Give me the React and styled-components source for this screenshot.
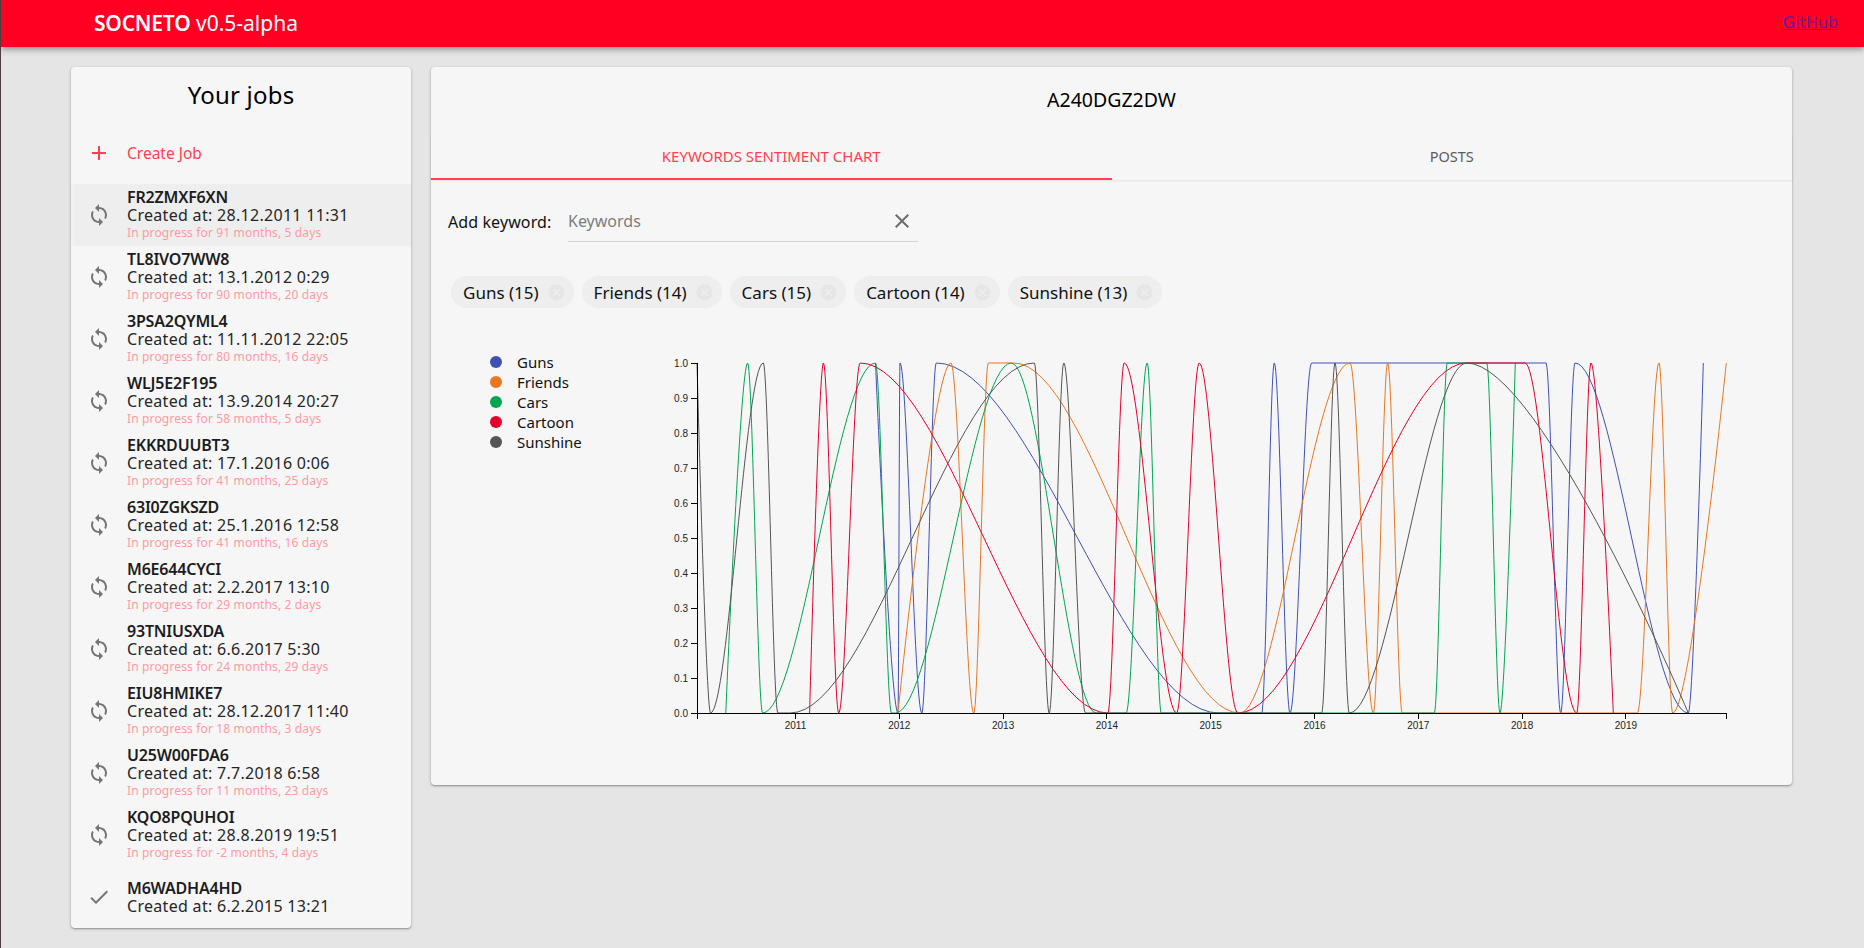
import React from 'react'
import styled, { createGlobalStyle } from 'styled-components'
import { MdAdd, MdCancel, MdCheck, MdClear, MdSync } from 'react-icons/md'

const GlobalStyle = createGlobalStyle`
    html, body {
        margin: 0;
        padding: 0;
        height: 100%;
    }

    body {
        background-color: #e5e5e5;
        border-left: 1px solid #4a3f3f;
        font-family: "Noto Sans", sans-serif;
        overflow: hidden;
    }
`

const AppBar = styled.header`
    height: 47px;
    background-color: #ff0022;
    display: flex;
    align-items: center;
    justify-content: space-between;
    padding: 0 26px 2px 93px;
    box-sizing: border-box;
    box-shadow: 0 2px 4px -1px rgba(0,0,0,.2), 0 4px 5px rgba(0,0,0,.14), 0 1px 10px rgba(0,0,0,.12);
    position: relative;
`

const Brand = styled.div`
    color: white;
    font-size: 21px;
    span {
        font-weight: 600;
        letter-spacing: -.2px;
    }
`

const GitHubLink = styled.a`
    font-family: "DejaVu Sans", sans-serif;
    font-size: 16px;
    color: #6a1aa8;
    text-decoration: underline;
`

const Content = styled.main`
    display: flex;
    align-items: flex-start;
    gap: 20px;
    padding: 20px 72px 0 70px;
`

const Card = styled.section`
    background-color: #f6f6f6;
    border-radius: 4px;
    box-shadow: 0 1px 3px rgba(0,0,0,.3), 0 1px 1px rgba(0,0,0,.14);
`

const JobsCard = styled(Card)`
    width: 340px;
    flex-shrink: 0;
`

const JobsTitle = styled.h2`
    margin: 0;
    padding-top: 11px;
    height: 44px;
    font-size: 24px;
    font-weight: 400;
    letter-spacing: .2px;
    line-height: 34px;
    text-align: center;
    color: #000;
`

const CreateRow = styled.div`
    height: 62px;
    display: flex;
    align-items: center;
    padding-left: 16px;
    color: #ff4050;
    font-size: 15.5px;
`

const IconSlot = styled.div`
    width: 40px;
    flex-shrink: 0;
    display: flex;
    font-size: 24px;
    color: ${props => props.$color || '#757575'};
`

const JobRow = styled.div`
    height: 62px;
    box-sizing: border-box;
    display: flex;
    align-items: center;
    padding-left: 13px;
    border-left: 3px solid ${props => props.$selected ? '#f2f2f2' : 'transparent'};
    background-color: ${props => props.$selected ? '#eeeeee' : 'transparent'};
`

const JobId = styled.div`
    font-size: 16px;
    font-weight: 600;
    letter-spacing: -.2px;
    line-height: 17px;
    color: #1c1c1c;
`

const JobCreated = styled.div`
    font-size: 16px;
    letter-spacing: .3px;
    line-height: 18px;
    color: #262626;
`

const JobProgress = styled.div`
    font-size: 12px;
    letter-spacing: .15px;
    line-height: 18px;
    color: #ff9aa3;
`

const MainCard = styled(Card)`
    flex: 1;
    height: 718px;
`

const JobName = styled.h3`
    margin: 0;
    height: 67px;
    line-height: 66px;
    font-size: 19.5px;
    font-weight: 400;
    text-align: center;
    color: #000;
`

const Tabs = styled.div`
    display: flex;
    height: 46px;
    box-shadow: 0 1px 2px rgba(0,0,0,.08);
`

const Tab = styled.div`
    flex: 1;
    display: flex;
    align-items: center;
    justify-content: center;
    padding-bottom: 1px;
    font-size: ${props => props.$active ? '15px' : '14.5px'};
    text-transform: uppercase;
    color: ${props => props.$active ? '#ff4050' : '#5c5c5c'};
    border-bottom: 2px solid ${props => props.$active ? '#ff4050' : 'transparent'};
`

const KeywordRow = styled.div`
    display: flex;
    align-items: center;
    padding: 20px 0 0 17px;
`

const KeywordLabel = styled.div`
    width: 120px;
    padding-top: 1px;
    font-size: 16px;
    letter-spacing: .1px;
    color: #111;
`

const KeywordInput = styled.div`
    width: 350px;
    height: 42px;
    box-sizing: border-box;
    border-bottom: 1px solid #d4d4d4;
    display: flex;
    align-items: center;
    justify-content: space-between;
    padding: 1px 4px 0 0;
    font-size: 16px;
    color: #7d7d7d;
    svg {
        font-size: 24px;
        color: #6c6c6c;
    }
`

const Chips = styled.div`
    display: flex;
    gap: 8px;
    padding: 34px 0 0 20px;
`

const Chip = styled.div`
    height: 32px;
    display: flex;
    align-items: center;
    gap: 8px;
    padding: 0 8px 0 12px;
    border-radius: 16px;
    background-color: #eeeeee;
    font-size: 17px;
    color: #111;
    svg {
        font-size: 19px;
        color: #e6e6e6;
    }
`

const ChartRow = styled.div`
    display: flex;
    padding: 42px 0 0 59px;
`

const Legend = styled.ul`
    width: 160px;
    flex-shrink: 0;
    margin: 0;
    padding: 2px 0 0;
    list-style: none;
`

const LegendItem = styled.li`
    height: 20px;
    display: flex;
    align-items: center;
    gap: 15px;
    font-size: 15px;
    color: #111;
`

const Dot = styled.i`
    width: 12px;
    height: 12px;
    border-radius: 50%;
    background-color: ${props => props.$color};
`

const ChartSvg = styled.svg`
    display: block;
    font-family: "Liberation Sans", sans-serif;
    font-size: 10px;
`

const JOBS = [
    ['FR2ZMXF6XN', '28.12.2011 11:31', '91 months, 5 days'],
    ['TL8IVO7WW8', '13.1.2012 0:29', '90 months, 20 days'],
    ['3PSA2QYML4', '11.11.2012 22:05', '80 months, 16 days'],
    ['WLJ5E2F195', '13.9.2014 20:27', '58 months, 5 days'],
    ['EKKRDUUBT3', '17.1.2016 0:06', '41 months, 25 days'],
    ['63I0ZGKSZD', '25.1.2016 12:58', '41 months, 16 days'],
    ['M6E644CYCI', '2.2.2017 13:10', '29 months, 2 days'],
    ['93TNIUSXDA', '6.6.2017 5:30', '24 months, 29 days'],
    ['EIU8HMIKE7', '28.12.2017 11:40', '18 months, 3 days'],
    ['U25W00FDA6', '7.7.2018 6:58', '11 months, 23 days'],
    ['KQO8PQUHOI', '28.8.2019 19:51', '-2 months, 4 days'],
    ['M6WADHA4HD', '6.2.2015 13:21', null],
]

const KEYWORDS = ['Guns (15)', 'Friends (14)', 'Cars (15)', 'Cartoon (14)', 'Sunshine (13)']

// chart geometry, svg origin sits at the left of the y labels
const X0 = 47
const X1 = 1076
const Y_TOP = 13
const Y_BOTTOM = 363
const SVG_LEFT = 650

// traced turning points, page x of each extreme, 0 = bottom and 1 = top
const a = zx => 660 + zx / 2.613 - SVG_LEFT
const b = zx => 1240 + zx / 3 - SVG_LEFT

// the series start and stop mid slope, so their first and last points have no flat tangent
const SERIES = [
    { name: 'Guns', color: '#3f51b5', points: [
        [a(563), 1], [a(622), 0], [a(627), 1], [a(684), 0], [a(722), 1], [a(1460), 0],
        [b(65), 0], [b(103), 1], [b(150), 0], [b(215), 1], [b(918), 1], [b(962), 0],
        [b(1005), 1], [b(1345), 0], [b(1390), 1],
    ] },
    { name: 'Friends', color: '#e87722', points: [
        [a(622), 0], [a(760), 1], [a(820), 0], [a(858), 1], [a(925), 1], [a(1515), 0],
        [b(330), 1], [b(400), 0], [b(443), 1], [b(487), 0], [b(1192), 0], [b(1257), 1],
        [b(1298), 0], [b(1459), 1],
    ] },
    { name: 'Cars', color: '#00a651', points: [
        [a(172), 0], [a(229), 1], [a(268), 0], [a(563), 1], [a(605), 0], [a(615), 0],
        [a(918), 1], [a(1140), 0], [a(1218), 0], [a(1273), 1], [a(1310), 0], [b(583), 0],
        [b(622), 1], [b(740), 1], [b(780), 0], [b(826), 1],
    ] },
    { name: 'Cartoon', color: '#e4002b', points: [
        [a(391), 0], [a(427), 1], [a(467), 0], [a(523), 1], [a(1170), 0], [a(1213), 1],
        [a(1350), 0], [a(1409), 1], [a(1510), 0], [b(680), 1], [b(855), 1], [b(1010), 0],
        [b(1053), 1], [b(1120), 0],
    ] },
    { name: 'Sunshine', color: '#555555', points: [
        [X0, 1], [a(132), 0], [a(270), 1], [a(308), 0], [a(340), 0], [a(978), 1], [a(1017), 0],
        [a(1055), 1], [a(1112), 0], [b(245), 0], [b(285), 1], [b(328), 0], [b(680), 1], [b(1345), 0],
    ] },
]

const toY = v => Y_BOTTOM - v * (Y_BOTTOM - Y_TOP)

const buildPath = points => {
    const last = points.length - 1
    let d = `M${points[0][0].toFixed(1)} ${toY(points[0][1])}`
    for (let i = 1; i <= last; i++) {
        const [x0, v0] = points[i - 1]
        const [x1, v1] = points[i]
        const c = (x1 - x0) / 3
        if (v0 === v1) {
            d += `L${x1.toFixed(1)} ${toY(v1)}`
        } else {
            const c0 = i === 1 ? 0 : c
            const c1 = i === last ? 0 : c
            d += `C${(x0 + c0).toFixed(1)} ${toY(v0)} ${(x1 - c1).toFixed(1)} ${toY(v1)} ${x1.toFixed(1)} ${toY(v1)}`
        }
    }
    return d
}

const YEARS = [2011, 2012, 2013, 2014, 2015, 2016, 2017, 2018, 2019]
const yearX = year => 795.5 + (year - 2011) * 103.8 - SVG_LEFT
const Y_TICKS = [0, 1, 2, 3, 4, 5, 6, 7, 8, 9, 10]

const SentimentChart = () => (
    <ChartSvg width="1110" height="390" viewBox="0 0 1110 390">
        {SERIES.map(s => (
            <path key={s.name} d={buildPath(s.points)} fill="none" stroke={s.color} strokeWidth="1" />
        ))}
        <g shapeRendering="crispEdges" stroke="#000" fill="none">
            <path d={`M${X0 - 6} ${Y_TOP}H${X0}V${Y_BOTTOM}H${X1}V${Y_BOTTOM + 6}M${X0} ${Y_BOTTOM}V${Y_BOTTOM + 6}`} />
            {Y_TICKS.map(t => (
                <line key={t} x1={X0 - 6} x2={X0} y1={toY(t / 10)} y2={toY(t / 10)} />
            ))}
            {YEARS.map(year => (
                <line key={year} x1={yearX(year)} x2={yearX(year)} y1={Y_BOTTOM} y2={Y_BOTTOM + 6} />
            ))}
        </g>
        {Y_TICKS.map(t => (
            <text key={t} x={X0 - 9} y={toY(t / 10) + 3.5} textAnchor="end" fill="#222">{(t / 10).toFixed(1)}</text>
        ))}
        {YEARS.map(year => (
            <text key={year} x={yearX(year)} y={Y_BOTTOM + 16} textAnchor="middle" fill="#222">{year}</text>
        ))}
    </ChartSvg>
)

const App = () => (
    <>
        <GlobalStyle />
        <AppBar>
            <Brand><span>SOCNETO</span> v0.5-alpha</Brand>
            <GitHubLink href="#">GitHub</GitHubLink>
        </AppBar>
        <Content>
            <JobsCard>
                <JobsTitle>Your jobs</JobsTitle>
                <CreateRow>
                    <IconSlot $color="#ff4050"><MdAdd /></IconSlot>
                    Create Job
                </CreateRow>
                {JOBS.map(([id, created, progress], i) => (
                    <JobRow key={id} $selected={i === 0}>
                        <IconSlot>{progress ? <MdSync /> : <MdCheck />}</IconSlot>
                        <div>
                            <JobId>{id}</JobId>
                            <JobCreated>Created at: {created}</JobCreated>
                            {progress && <JobProgress>In progress for {progress}</JobProgress>}
                        </div>
                    </JobRow>
                ))}
            </JobsCard>
            <MainCard>
                <JobName>A240DGZ2DW</JobName>
                <Tabs>
                    <Tab $active>Keywords sentiment chart</Tab>
                    <Tab>Posts</Tab>
                </Tabs>
                <KeywordRow>
                    <KeywordLabel>Add keyword:</KeywordLabel>
                    <KeywordInput>Keywords<MdClear /></KeywordInput>
                </KeywordRow>
                <Chips>
                    {KEYWORDS.map(k => (
                        <Chip key={k}>{k}<MdCancel /></Chip>
                    ))}
                </Chips>
                <ChartRow>
                    <Legend>
                        {SERIES.map(s => (
                            <LegendItem key={s.name}><Dot $color={s.color} />{s.name}</LegendItem>
                        ))}
                    </Legend>
                    <SentimentChart />
                </ChartRow>
            </MainCard>
        </Content>
    </>
)

export default App
